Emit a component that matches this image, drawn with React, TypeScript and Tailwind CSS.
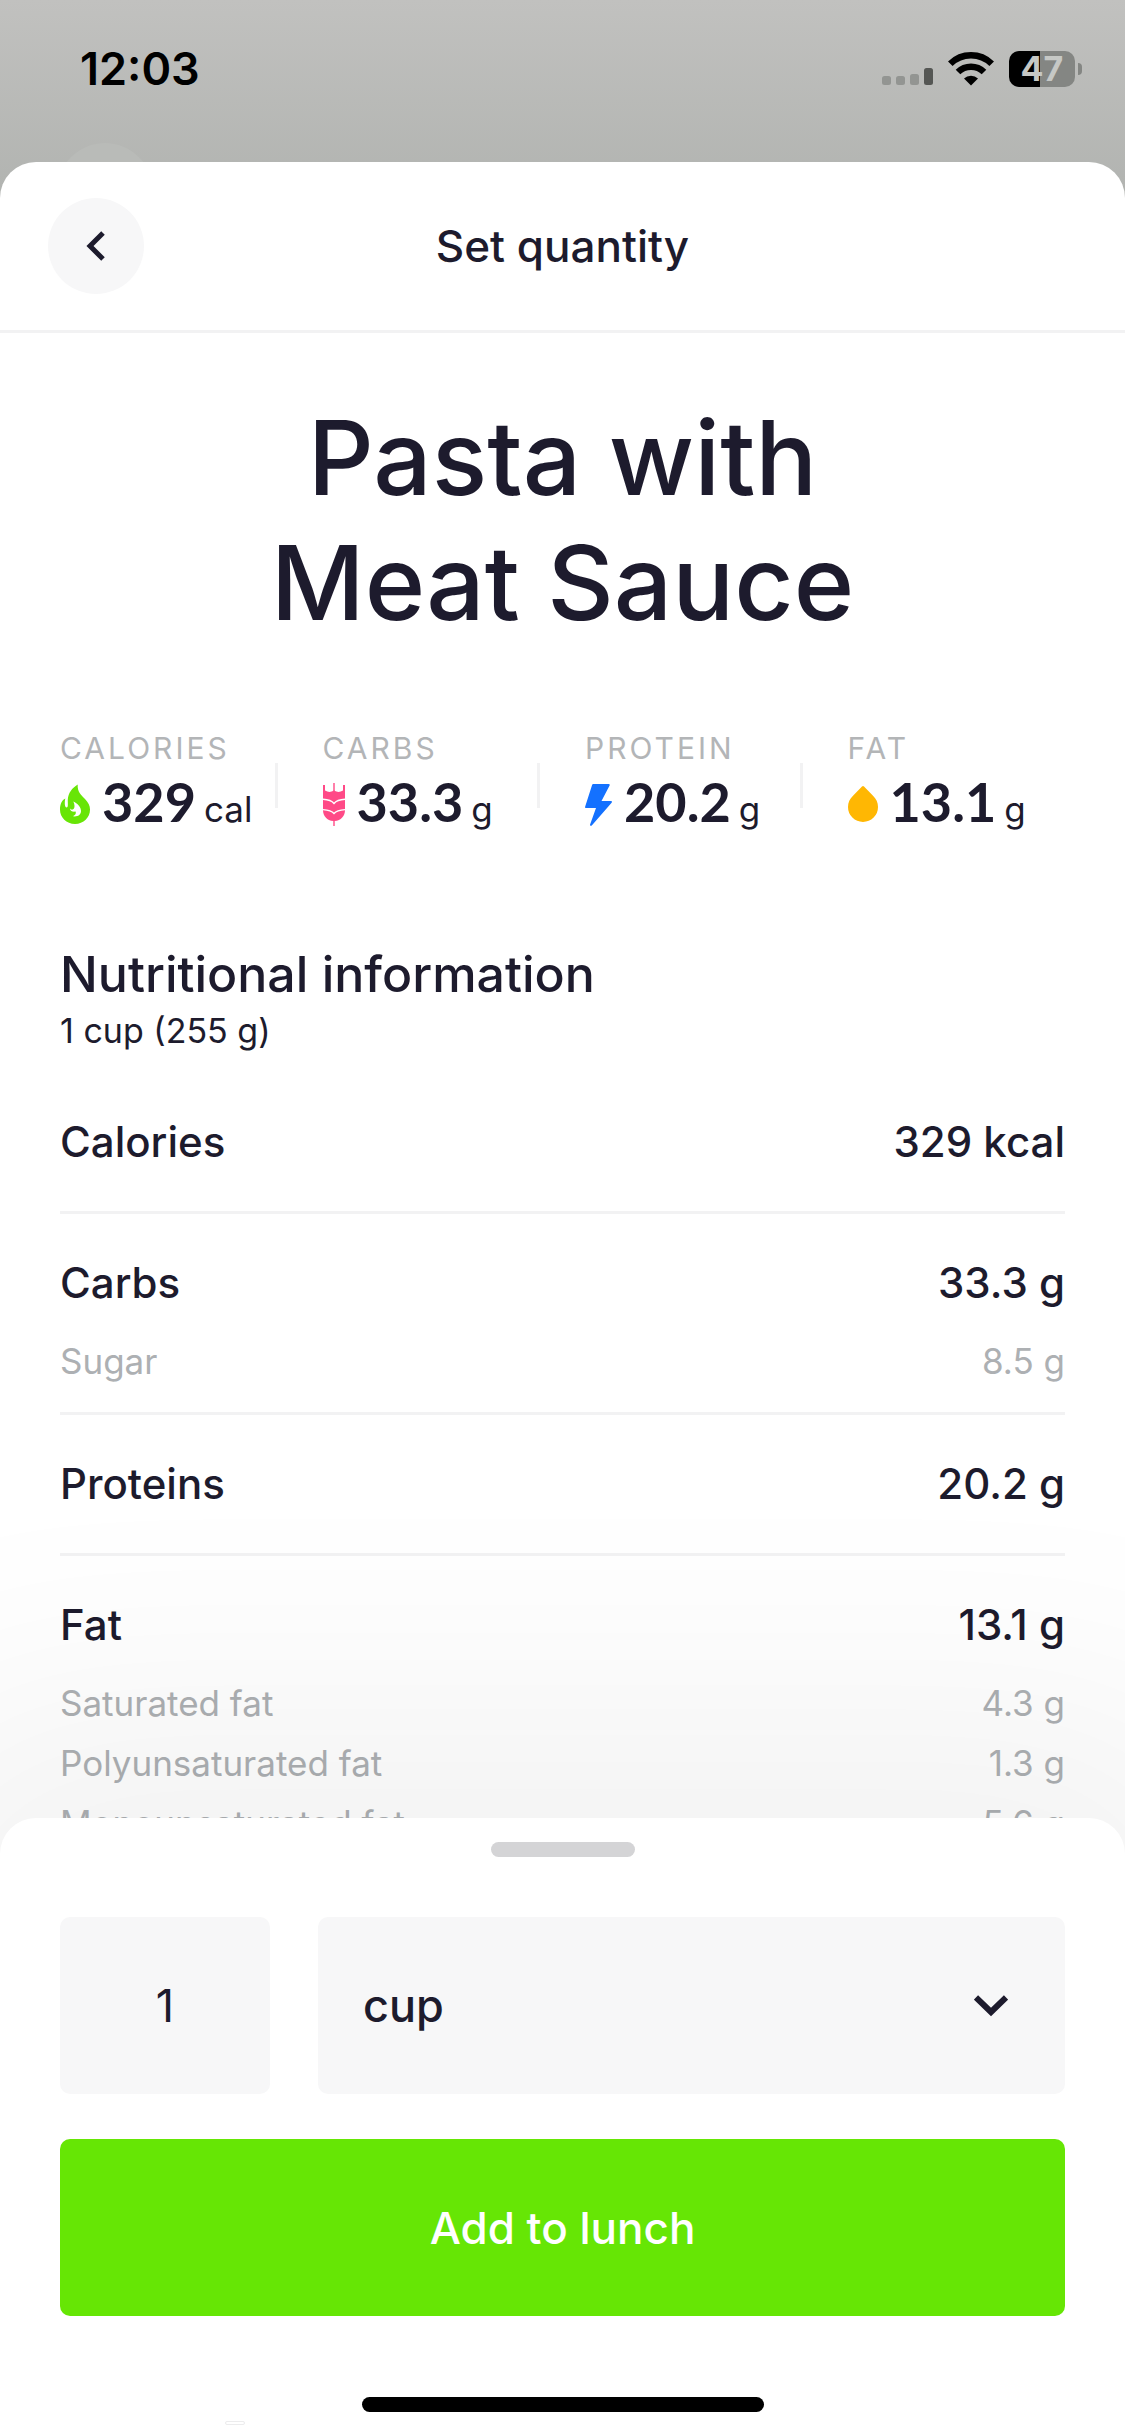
import { useState, type ReactNode } from "react";

type NutrientRow = { label: string; value: string };
type Nutrient = NutrientRow & { details?: NutrientRow[] };

const NUTRIENTS: Nutrient[] = [
  { label: "Calories", value: "329 kcal" },
  {
    label: "Carbs",
    value: "33.3 g",
    details: [{ label: "Sugar", value: "8.5 g" }],
  },
  { label: "Proteins", value: "20.2 g" },
  {
    label: "Fat",
    value: "13.1 g",
    details: [
      { label: "Saturated fat", value: "4.3 g" },
      { label: "Polyunsaturated fat", value: "1.3 g" },
      { label: "Monounsaturated fat", value: "5.6 g" },
    ],
  },
];

function FlameIcon() {
  return (
    <svg width="30" height="40" viewBox="0 0 30 40" aria-hidden="true">
      <path
        d="M17.7 0.5C17.2 8 21 10.5 25 15C28.5 18.8 30 21.5 30 25.5C30 33.5 23.5 40 15 40C6.5 40 0 33.5 0 25.5C0 20 2 16 5.3 14.5C4.3 19 4.8 23.5 6.6 23.5C8.6 23.5 7.6 19 7.8 15.5C8.2 9 12 4 17.7 0.5Z"
        fill="#68e506"
      />
      <path
        d="M13.3 17.5C17.5 19.5 21 23 21 27C21 31 17.5 33 12.8 32.3C15.5 31.3 16.3 29.5 15.6 27.6C12.6 28.2 10.2 27 10 24.5C11 26 13 26 14 24.5C15 22.5 14.5 20 13.3 17.5Z"
        fill="white"
      />
    </svg>
  );
}

function WheatIcon() {
  return (
    <svg width="22" height="43" viewBox="0 0 22 43" aria-hidden="true">
      <path
        d="M0 2H2V7.5C5 9.3 8 9.5 10.3 7.5V0H11.7V7.5C14 9.5 17 9.3 20 7.5V2H22V27C22 33 18 37.5 11.7 38V43H10.3V38C4 37.5 0 33 0 27Z"
        fill="#ff4a87"
      />
      <path
        d="M0 16.3C5.5 16.6 9 18 11 20.5C13 18 16.5 16.6 22 16.3M0 26.6C5.5 26.9 9 28 11 30.5C13 28 16.5 26.9 22 26.6"
        fill="none"
        stroke="white"
        strokeWidth="1.4"
      />
    </svg>
  );
}

function BoltIcon() {
  return (
    <svg width="27" height="43" viewBox="0 0 27 43" aria-hidden="true">
      <path
        d="M8.5 1H23.5C24.5 1 25 1.7 24.6 2.5L16.5 18H26C27 18 27.3 18.9 26.6 19.7L7 42.3C6 43.4 4.7 42.8 5.1 41.5L11 25H1C0.2 25 -0.1 24.4 0.2 23.5L7 2.2C7.3 1.4 7.7 1 8.5 1Z"
        fill="#1471ff"
      />
    </svg>
  );
}

function DropIcon() {
  return (
    <svg width="30" height="36" viewBox="0 0 30 36" aria-hidden="true">
      <path
        d="M14 0.6Q15 -0.4 16 0.6L25 9.8C28.2 13 30 16.5 30 21A15 15 0 0 1 0 21C0 16.5 1.8 13 5 9.8Z"
        fill="#ffb703"
      />
    </svg>
  );
}

function StatusIcons() {
  return (
    <div className="flex items-center gap-[15px]">
      <svg width="51" height="36" viewBox="0 0 51 36" aria-label="Signal">
        <g fill="#939592">
          <rect x="0" y="25" width="9" height="9" rx="2.5" />
          <rect x="14" y="25" width="9" height="9" rx="2.5" />
          <rect x="28" y="23" width="9" height="11" rx="2.5" />
        </g>
        <rect x="42" y="17" width="9" height="17" rx="2.5" fill="#555754" />
      </svg>
      <svg width="46" height="36" viewBox="0 0 46 36" aria-label="Wi-Fi">
        <g fill="none" stroke="black" strokeWidth="6.5">
          <path d="M2.3 12.8A29.5 29.5 0 0 1 43.7 12.8" />
          <path d="M10 21A18.5 18.5 0 0 1 36 21" />
        </g>
        <path d="M23 34.5L16 27.5A10 10 0 0 1 30 27.5Z" />
      </svg>
      <div className="flex items-center gap-[3px]">
        <div className="flex h-9 w-[66px] items-center justify-center rounded-[10px] bg-[linear-gradient(90deg,#000_47%,#848683_47%)] text-[34px] leading-none font-bold text-[#c6c8c5]">
          47
        </div>
        <div className="h-3 w-1 rounded-r-full bg-[#848683]" />
      </div>
    </div>
  );
}

function Stat({
  label,
  value,
  unit,
  icon,
  last = false,
}: {
  label: string;
  value: string;
  unit: string;
  icon: ReactNode;
  last?: boolean;
}) {
  return (
    <div className="relative">
      <p className="text-[30px] leading-9 tracking-widest text-[#b3b5b7]">
        {label}
      </p>
      <div className="mt-2 flex h-[60px] items-center gap-3">
        {icon}
        <p className="flex items-baseline gap-2">
          <span className="font-[Lato,sans-serif] text-[54px] leading-[60px] font-bold">
            {value}
          </span>
          <span className="text-[35px]">{unit}</span>
        </p>
      </div>
      {!last && (
        <div className="absolute top-[33px] right-0 h-[45px] w-[3px] bg-[#f2f2f3]" />
      )}
    </div>
  );
}

function NutrientSection({ label, value, details }: Nutrient) {
  return (
    <li className="border-b-[3px] border-[#f2f2f3] pt-[42px] pb-[21px]">
      <div className="flex justify-between pb-[21px] text-[42px] leading-[54px] font-medium">
        <span>{label}</span>
        <span>{value}</span>
      </div>
      {details && (
        <ul className="text-[35px] leading-[60px] text-[#adb0b3]">
          {details.map((row) => (
            <li key={row.label} className="flex justify-between">
              <span>{row.label}</span>
              <span>{row.value}</span>
            </li>
          ))}
        </ul>
      )}
    </li>
  );
}

export default function App() {
  const [quantity, setQuantity] = useState("1");
  const [unit, setUnit] = useState("cup");

  return (
    <div className="flex h-screen flex-col overflow-hidden bg-[linear-gradient(180deg,#c1c1bf_0px,#b1b3b0_200px)] font-[Inter,sans-serif] text-[#1d1b2d]">
      <div className="relative flex h-[162px] shrink-0 items-start justify-between pt-[51px] pr-[43px] pl-[80px] text-black">
        <div className="absolute top-[143px] left-[57px] size-24 rounded-full bg-[#b9bbb8]" />
        <span className="text-[45px] leading-9 font-semibold">12:03</span>
        <StatusIcons />
      </div>

      <div className="relative flex min-h-0 flex-1 flex-col overflow-hidden rounded-t-[36px] bg-white">
        <header className="grid h-[171px] shrink-0 grid-cols-[96px_1fr_96px] items-center border-b-[3px] border-[#f2f2f3] px-12">
          <button
            type="button"
            aria-label="Back"
            className="flex size-24 items-center justify-center rounded-full bg-[#f7f7f8]"
          >
            <svg width="20" height="30" viewBox="0 0 20 30" aria-hidden="true">
              <path
                d="M17 2L4 15L17 28"
                fill="none"
                stroke="#1d1b2d"
                strokeWidth="5"
              />
            </svg>
          </button>
          <h2 className="text-center text-[44px] leading-[54px] font-medium">
            Set quantity
          </h2>
        </header>

        <main className="min-h-0 flex-1 overflow-y-auto px-[60px] pt-[62px] [scrollbar-width:none]">
          <h1 className="text-center text-[103px] leading-[125px] font-medium">
            Pasta with <br />
            Meat Sauce
          </h1>

          <div className="mt-[85px] grid grid-cols-4 gap-[45px]">
            <Stat label="CALORIES" value="329" unit="cal" icon={<FlameIcon />} />
            <Stat label="CARBS" value="33.3" unit="g" icon={<WheatIcon />} />
            <Stat label="PROTEIN" value="20.2" unit="g" icon={<BoltIcon />} />
            <Stat label="FAT" value="13.1" unit="g" icon={<DropIcon />} last />
          </div>

          <h3 className="mt-[110px] text-[50px] leading-[60px] font-medium">
            Nutritional information
          </h3>
          <p className="mt-[3px] text-[34px] leading-[48px]">1 cup (255 g)</p>

          <ul className="mt-[18px]">
            {NUTRIENTS.map((nutrient) => (
              <NutrientSection key={nutrient.label} {...nutrient} />
            ))}
          </ul>
        </main>

        <form
          onSubmit={(e) => e.preventDefault()}
          className="relative -mt-9 shrink-0 rounded-t-[36px] bg-white px-[60px] pt-6 pb-6 shadow-[0_0_800px_120px_rgba(0,0,0,0.05)]"
        >
          <div className="mx-auto h-[15px] w-36 rounded-full bg-[#d4d4d6]" />
          <div className="mt-[60px] flex gap-12">
            <input
              aria-label="Quantity"
              inputMode="decimal"
              value={quantity}
              onChange={(e) => setQuantity(e.target.value)}
              className="h-[177px] w-[210px] rounded-[10px] bg-[#f7f7f8] text-center text-[45px] focus:outline-none"
            />
            <div className="relative flex-1">
              <select
                aria-label="Unit"
                value={unit}
                onChange={(e) => setUnit(e.target.value)}
                className="h-[177px] w-full appearance-none rounded-[10px] bg-[#f7f7f8] px-[45px] text-[45px] font-medium focus:outline-none"
              >
                <option value="cup">cup</option>
                <option value="g">g</option>
              </select>
              <svg
                width="34"
                height="22"
                viewBox="0 0 34 22"
                className="pointer-events-none absolute top-[78px] right-[57px]"
                aria-hidden="true"
              >
                <path
                  d="M2 2.5L17 17L32 2.5"
                  fill="none"
                  stroke="#1d1b2d"
                  strokeWidth="6"
                />
              </svg>
            </div>
          </div>
          <button
            type="submit"
            className="mt-[45px] h-[177px] w-full rounded-[10px] bg-[#66e605] text-[44px] font-medium text-white"
          >
            Add to lunch
          </button>
          <div className="mx-auto mt-[81px] h-[15px] w-[402px] rounded-full bg-black" />
          <div className="absolute bottom-[11px] left-[225px] h-1 w-5 rounded-full border border-[#ececed]" />
        </form>
      </div>
    </div>
  );
}
